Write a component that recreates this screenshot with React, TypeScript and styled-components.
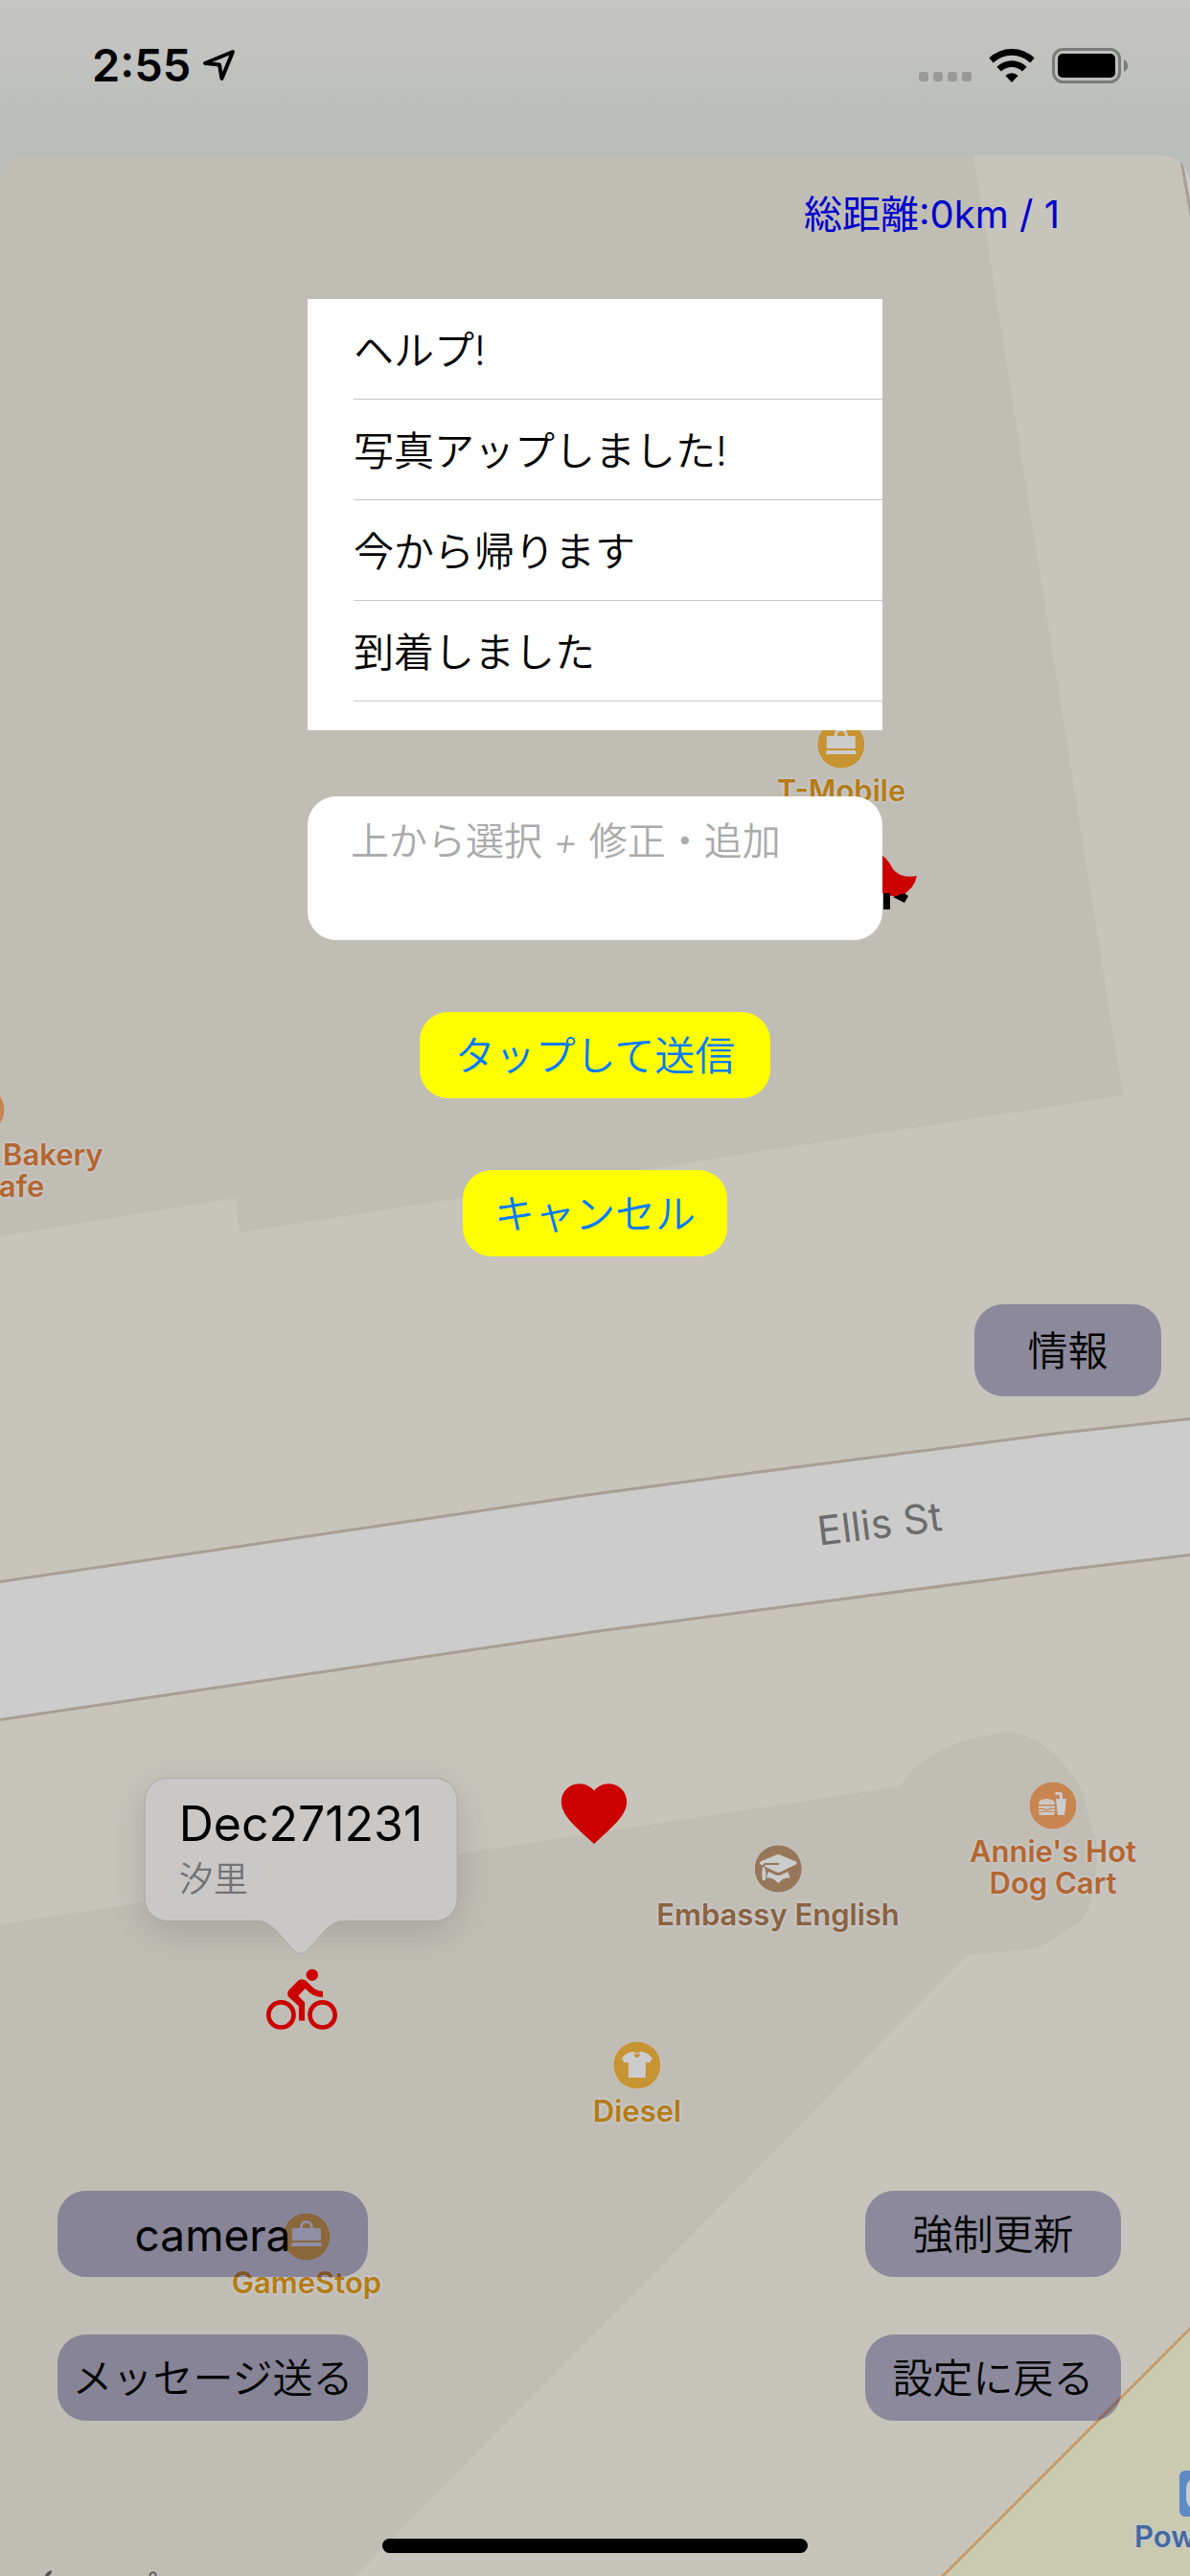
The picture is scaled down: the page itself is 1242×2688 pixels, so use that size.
import React, { useState } from 'react';
import styled, { createGlobalStyle } from 'styled-components';
import { MdDirectionsBike, MdFavorite } from 'react-icons/md';

const GlobalStyle = createGlobalStyle`
  *, *::before, *::after { box-sizing: border-box; }
  body {
    margin: 0;
    background: #b9bcb9;
    font-family: Inter, "Noto Sans CJK JP", sans-serif;
    color: #000;
  }
  button, textarea { font: inherit; }
  button { border: 0; cursor: pointer; }
`;

const Screen = styled.main`
  min-height: 100vh;
  display: flex;
  flex-direction: column;
  overflow: hidden;
  background: linear-gradient(#c6c6c5, #b9bcb9 162px);
`;

/* ---------- status bar ---------- */

const StatusBar = styled.header`
  height: 162px;
  padding: 37px 64px 0 96px;
  display: flex;
  justify-content: space-between;
  align-items: flex-start;
`;

const StatusGroup = styled.div<{ $gap: number }>`
  height: 62px;
  display: flex;
  align-items: center;
  gap: ${(p) => p.$gap}px;
`;

const Clock = styled.time`
  font-size: 47px;
  line-height: 62px;
  font-weight: 600;
`;

const StatusIcon = styled.svg`
  display: block;
  flex: none;
`;

/* ---------- sheet and its map ---------- */

const Sheet = styled.section`
  position: relative;
  flex: 1;
  display: flex;
  flex-direction: column;
  overflow: hidden;
  border-radius: 30px 30px 0 0;
  background: #c7c4bc;
`;

const MapCanvas = styled.div`
  position: absolute;
  inset: 0;
  overflow: hidden;
`;

const MapDrawing = styled.svg`
  position: absolute;
  inset: 0;
  width: 100%;
  height: 100%;
`;

const MapItem = styled.div<{ $x: number; $y: number }>`
  position: absolute;
  left: calc(50% + ${(p) => p.$x - 621}px);
  top: ${(p) => p.$y - 162}px;
  white-space: nowrap;
`;

const PoiBox = styled(MapItem)`
  display: flex;
  flex-direction: column;
  align-items: center;
  gap: 5px;
  transform: translateX(-50%);
`;

const PoiLabel = styled.span<{ $color: string; $indent?: number }>`
  color: ${(p) => p.$color};
  font-size: 31px;
  line-height: 33px;
  font-weight: 600;
  text-align: ${(p) => (p.$indent ? 'left' : 'center')};
  text-indent: ${(p) => p.$indent ?? 0}px;
  display: block;
  white-space: pre;
  text-shadow: 0 0 2px #cbcacb, 0 0 2px #cbcacb, 0 0 3px #cbcacb, 0 0 3px #cbcacb, 0 0 4px #cbcacb;
`;

const Street = styled(MapItem)`
  font-size: 42px;
  line-height: 48px;
  color: #6c6c6c;
  transform: translate(-50%, -50%) rotate(-7deg);
`;

const Legal = styled(MapItem)`
  display: flex;
  align-items: flex-start;
  gap: 4px;
  font-size: 34px;
  line-height: 40px;
  color: #505050;
`;

const Marker = styled(MapItem)`
  display: flex;
  color: #cc0000;
`;

const Callout = styled(MapItem)`
  min-width: 326px;
  height: 150px;
  padding: 17px 35px;
  border: 1px solid #aaa9a6;
  border-radius: 24px;
  background: #c9c8c7;
  box-shadow: 0 10px 40px rgba(0, 0, 0, 0.14);
  transform: translateX(-50%);
`;

const CalloutTitle = styled.p`
  margin: 0;
  font-size: 50px;
  line-height: 60px;
`;

const CalloutSubtitle = styled.p`
  margin: 0;
  font-size: 36px;
  line-height: 56px;
  font-weight: 350;
  color: #737375;
`;

const CalloutTail = styled.svg`
  position: absolute;
  left: 50%;
  top: 100%;
  margin: -2px 0 0 -50px;
`;

/* ---------- controls over the map ---------- */

const Controls = styled.div`
  position: relative;
  flex: 1;
  display: flex;
  flex-direction: column;
  padding-bottom: 24px;
`;

const Distance = styled.p`
  margin: 0;
  padding: 32px 136px 0 0;
  font-size: 40px;
  line-height: 60px;
  text-align: right;
  color: #0000cc;
`;

const MessageForm = styled.form`
  width: 600px;
  max-width: 100%;
  margin: 58px auto 0;
  display: flex;
  flex-direction: column;
  align-items: center;
  gap: 75px;
`;

const Compose = styled.div`
  width: 100%;
  display: flex;
  flex-direction: column;
  gap: 69px;
`;

const PresetList = styled.ul`
  margin: 0;
  padding: 0 0 30px 48px;
  list-style: none;
  background: #fff;
`;

const PresetItem = styled.li`
  height: 105px;
  border-bottom: 1px solid #c6c6c8;
`;

const PresetButton = styled.button`
  width: 100%;
  height: 100%;
  padding: 3px 0 0;
  background: transparent;
  color: #000;
  font-size: 42px;
  line-height: 60px;
  font-weight: 350;
  text-align: left;
`;

const MessageBox = styled.textarea`
  display: block;
  width: 100%;
  height: 150px;
  padding: 17px 45px;
  border: 0;
  border-radius: 30px;
  outline: 0;
  resize: none;
  overflow: hidden;
  background: #fff;
  font-size: 40px;
  line-height: 60px;
  font-weight: 350;
  font-synthesis: none;

  &::placeholder {
    color: #aaa;
    font-style: italic;
    opacity: 1;
  }
`;

const ActionButton = styled.button<{ $padding: number }>`
  height: 90px;
  padding: 2px ${(p) => p.$padding}px 0;
  border-radius: 30px;
  background: #ffff00;
  color: #007aff;
  font-size: 42px;
  line-height: 60px;
  font-weight: 350;
`;

const MapButton = styled.button<{ $width: number; $tall?: boolean; $latin?: boolean }>`
  width: ${(p) => p.$width}px;
  height: ${(p) => (p.$tall ? 96 : 90)}px;
  padding: 2px 0 0;
  border-radius: 30px;
  background: rgba(0, 0, 78, 0.3);
  color: #000;
  font-size: ${(p) => (p.$latin ? 46 : 42)}px;
  line-height: 60px;
  font-weight: ${(p) => (p.$latin ? 400 : 350)};
  white-space: nowrap;
`;

const InfoRow = styled.div`
  margin-top: 50px;
  padding-right: 30px;
  display: flex;
  justify-content: flex-end;
`;

const BottomBar = styled.nav`
  margin-top: auto;
  padding: 0 72px 0 60px;
  display: flex;
  justify-content: space-between;
`;

const ButtonStack = styled.div`
  display: flex;
  flex-direction: column;
  gap: 60px;
`;

const HomeIndicator = styled.div`
  width: 444px;
  height: 15px;
  margin: 123px auto 0;
  border-radius: 8px;
  background: #000;
`;

/* ---------- drawings ---------- */

const LIGHT = '#cccccc';

const ARROW = (
  <StatusIcon width="36" height="36" viewBox="0 0 36 36" aria-hidden="true">
    <path
      d="M33 4 L4 16 L19 17.500 L21.500 32 Z"
      fill="none"
      stroke="#000"
      strokeWidth="4"
      strokeLinejoin="round"
    />
  </StatusIcon>
);

const DOTS = (
  <StatusIcon width="55" height="36" viewBox="0 0 55 36" aria-hidden="true" fill="#999a97">
    {[0, 15, 30, 45].map((x) => (
      <rect key={x} x={x} y="25" width="10" height="10" rx="3" />
    ))}
  </StatusIcon>
);

const WIFI = (
  <StatusIcon width="48" height="36" viewBox="0 0 48 36" aria-hidden="true">
    <path d="M24 36 L17.400 29 A9.500 9.500 0 0 1 30.600 29 Z" />
    <path d="M13 24.500 L8.400 19.700 A22 22 0 0 1 39.600 19.700 L35 24.500 A15.500 15.500 0 0 0 13 24.500 Z" />
    <path d="M4.800 15.500 L0.300 10.600 A34 34 0 0 1 47.700 10.600 L43.200 15.500 A27.600 27.600 0 0 0 4.800 15.500 Z" />
  </StatusIcon>
);

const BATTERY = (
  <StatusIcon width="80" height="37" viewBox="0 0 80 37" aria-hidden="true">
    <rect x="1.500" y="1.500" width="69" height="34" rx="10" fill="none" stroke="#7a7c79" strokeWidth="3" />
    <rect x="6" y="6" width="60" height="25" rx="5" />
    <path d="M75 12 Q79 14 79 18.500 Q79 23 75 25 Z" fill="#7a7c79" />
  </StatusIcon>
);

const BAG = (
  <g fill={LIGHT}>
    <path d="M18 17 V15 A7 7 0 0 1 32 15 V17 H29 V15 A4 4 0 0 0 21 15 V17 Z" />
    <rect x="10" y="16" width="30" height="13" rx="1" />
    <path d="M10 31 H40 L41 35 H9 Z" />
  </g>
);

const CAP = (
  <g>
    <path
      fill={LIGHT}
      d="M23 10.500 Q25 9.600 27 10.500 L43.500 17.500 Q45.500 19 43.500 20.500 L28 28 Q25 29.500 22 28 L6.500 20.500 Q5 19 6.500 17.500 Z"
    />
    <path
      fill={LIGHT}
      d="M15 28 L21 31 Q25 33 29 31 L35 28 L37.500 34.500 Q30 34 27.500 38 L25 40 L22.500 38 Q20 34 12.500 34.500 Z"
    />
    <path fill="none" stroke="#97775a" strokeWidth="2" d="M26 20 H12 Q9.500 20 9.500 24" />
    <path fill={LIGHT} d="M9 23 H10.500 L12.500 29 L11.500 37 H8.500 L8 29 Z" />
  </g>
);

const FOOD = (
  <g fill={LIGHT}>
    <path d="M10 24 Q10 18 18.500 18 Q27 18 27 24 Z" />
    <path d="M10 25.500 H27 V28 L23 27.600 L18.500 29 L14 27.600 L10 28 Z" />
    <path d="M10 29.300 L14 29 L18.500 30.400 L23 29 L27 29.300 V31 H10 Z" />
    <path d="M10 32 H27 Q27 35 24 35 H13 Q10 35 10 32 Z" />
    <path d="M28 18 H39 L37 35 H30 Z" />
    <path d="M27.500 11 H33 Q35 11 35 13.500 V18 H32 V14 H27.500 Z" />
    <g fill="#c88550">
      <circle cx="15" cy="21" r="0.600" />
      <circle cx="18.500" cy="20" r="0.600" />
      <circle cx="22" cy="21" r="0.600" />
    </g>
  </g>
);

const SHIRT = (
  <path
    fill={LIGHT}
    d="M19 11 H21.500 Q22 17 25 17 Q28 17 28.500 11 H31 Q38 13 41 18 L38 22.500 L34 22 V38 H16 V22 L12 22.500 L9 18 Q12 13 19 11 Z M21.500 11 Q25 13.500 28.500 11 L28.500 12.500 Q25 14.500 21.500 12.500 Z"
  />
);

type PoiProps = {
  x: number;
  y: number;
  label?: string;
  color: string;
  fill: string;
  children?: React.ReactNode;
};

function Poi({ x, y, label, color, fill, children }: PoiProps) {
  return (
    <PoiBox $x={x} $y={y}>
      <svg width="52" height="52" viewBox="-1 -1 52 52" aria-hidden="true">
        <circle cx="25" cy="25" r="25" fill={fill} stroke="#c6c4c2" strokeWidth="1" />
        {children}
      </svg>
      {label && <PoiLabel $color={color}>{label}</PoiLabel>}
    </PoiBox>
  );
}

function CityMap() {
  return (
    <MapCanvas>
      <MapDrawing viewBox="0 162 1242 2526" preserveAspectRatio="xMidYMin slice" aria-hidden="true">
        <g fill="#c0bdb5">
          <path d="M0 162 H1016 L1172 1143 L250 1286 L247 1250 L0 1290 Z" />
          <path d="M0 2008 L939 1864 L954 1844 L973 1831 L998 1819 L1023 1812 L1051 1807 L1072 1812 L1089 1821 L1104 1833 L1120 1853 L1131 1872 L1136 1897 L1145 1925 L1145 1947 L1136 1993 L1125 2007 L1104 2021 L1083 2033 L1010 2040 L371 2688 H0 Z" />
        </g>
        <path d="M1232 162 L1246 240 V162 Z" fill={LIGHT} stroke="#a89e93" strokeWidth="3" />
        <path
          d="M-4 1651 L613 1560 L800 1535 L1100 1496 L1246 1480 V1622 L1120 1637 L800 1679 L625 1702 L-4 1795 Z"
          fill={LIGHT}
          stroke="#a89e93"
          strokeWidth="3"
        />
        <path d="M1246 2426 L980 2692 H1246 Z" fill="#c9cab0" stroke="#c99a6e" strokeWidth="3" />
        <path d="M916 890 Q925 893 932 907 Q940 917 957 914 Q954 928 940 935 Q930 937 916 929 Z" fill="#cc0000" />
        <path d="M922 932 H929 V949 H922 Z M932 936 L944 932 L948 935 L944 942 Z" fill="#000" />
        <g>
          <rect x="1231" y="2578" width="48" height="48" rx="6" fill="#5e8ac4" />
          <rect x="1238" y="2585" width="34" height="34" rx="12" fill={LIGHT} />
        </g>
      </MapDrawing>

      <Poi x={878} y={751} label="T-Mobile" color="#b57c14" fill="#c69433">{BAG}</Poi>
      <Poi x={-20} y={1132} color="#b4662f" fill="#c88550" />
      <MapItem $x={-24} $y={1188}>
        <PoiLabel $color="#b4662f" $indent={27}>{'Bakery\nCafe'}</PoiLabel>
      </MapItem>
      <Poi x={1099} y={1858} label={"Annie's Hot\nDog Cart"} color="#b4662f" fill="#c88550">{FOOD}</Poi>
      <Poi x={812} y={1924} label="Embassy English" color="#8a6240" fill="#97775a">{CAP}</Poi>
      <Poi x={665} y={2129} label="Diesel" color="#b57c14" fill="#c69433">{SHIRT}</Poi>
      <Poi x={320} y={2308} label="GameStop" color="#b57c14" fill="#c69433">{BAG}</Poi>
      <MapItem $x={1184} $y={2630}>
        <PoiLabel $color="#44699f">Powell St</PoiLabel>
      </MapItem>
      <Street $x={918} $y={1590}>Ellis St</Street>

      <Marker $x={579} $y={1851}><MdFavorite size={82} /></Marker>
      <Marker $x={278} $y={2050}><MdDirectionsBike size={74} /></Marker>
      <Callout $x={314} $y={1855}>
        <CalloutTitle>Dec271231</CalloutTitle>
        <CalloutSubtitle>汐里</CalloutSubtitle>
        <CalloutTail width="100" height="40" viewBox="0 0 100 40" aria-hidden="true">
          <path
            d="M0 1.500 C22 1.500 28 19 44 34 Q50 39 56 34 C72 19 78 1.500 100 1.500"
            fill="#c9c8c7"
            stroke="#aaa9a6"
          />
          <rect width="100" height="2" fill="#c9c8c7" />
        </CalloutTail>
      </Callout>

      <Legal $x={36} $y={2680}>
        <svg width="22" height="30" viewBox="0 0 22 30" aria-hidden="true" fill="#505050">
          <path d="M11 9 Q11 4 18 2 Q18 8 11 9 Z" />
          <path d="M11 11 Q20 6 21 14 Q17 20 21 23 Q15 34 11 28 Q7 34 2 24 Q-2 10 11 11 Z" />
        </svg>
        マップ
      </Legal>
    </MapCanvas>
  );
}

const PRESETS = ['ヘルプ!', '写真アップしました!', '今から帰ります', '到着しました'];

export default function App() {
  const [message, setMessage] = useState('');

  return (
    <Screen lang="ja">
      <GlobalStyle />
      <StatusBar>
        <StatusGroup $gap={11}>
          <Clock>2:55</Clock>
          {ARROW}
        </StatusGroup>
        <StatusGroup $gap={18}>
          {DOTS}
          {WIFI}
          {BATTERY}
        </StatusGroup>
      </StatusBar>

      <Sheet>
        <CityMap />
        <Controls>
          <Distance>総距離:0km / 1</Distance>

          <MessageForm onSubmit={(e) => e.preventDefault()}>
            <Compose>
              <PresetList>
                {PRESETS.map((text) => (
                  <PresetItem key={text}>
                    <PresetButton type="button" onClick={() => setMessage(text)}>{text}</PresetButton>
                  </PresetItem>
                ))}
              </PresetList>
              <MessageBox
                aria-label="メッセージ"
                placeholder="上から選択 + 修正・追加"
                value={message}
                onChange={(e) => setMessage(e.target.value)}
              />
            </Compose>
            <ActionButton type="submit" $padding={37}>タップして送信</ActionButton>
            <ActionButton type="button" $padding={33} onClick={() => setMessage('')}>キャンセル</ActionButton>
          </MessageForm>

          <InfoRow>
            <MapButton type="button" $width={195} $tall>情報</MapButton>
          </InfoRow>

          <BottomBar>
            <ButtonStack>
              <MapButton type="button" $width={324} $latin>camera</MapButton>
              <MapButton type="button" $width={324}>メッセージ送る</MapButton>
            </ButtonStack>
            <ButtonStack>
              <MapButton type="button" $width={267}>強制更新</MapButton>
              <MapButton type="button" $width={267}>設定に戻る</MapButton>
            </ButtonStack>
          </BottomBar>
          <HomeIndicator />
        </Controls>
      </Sheet>
    </Screen>
  );
}
